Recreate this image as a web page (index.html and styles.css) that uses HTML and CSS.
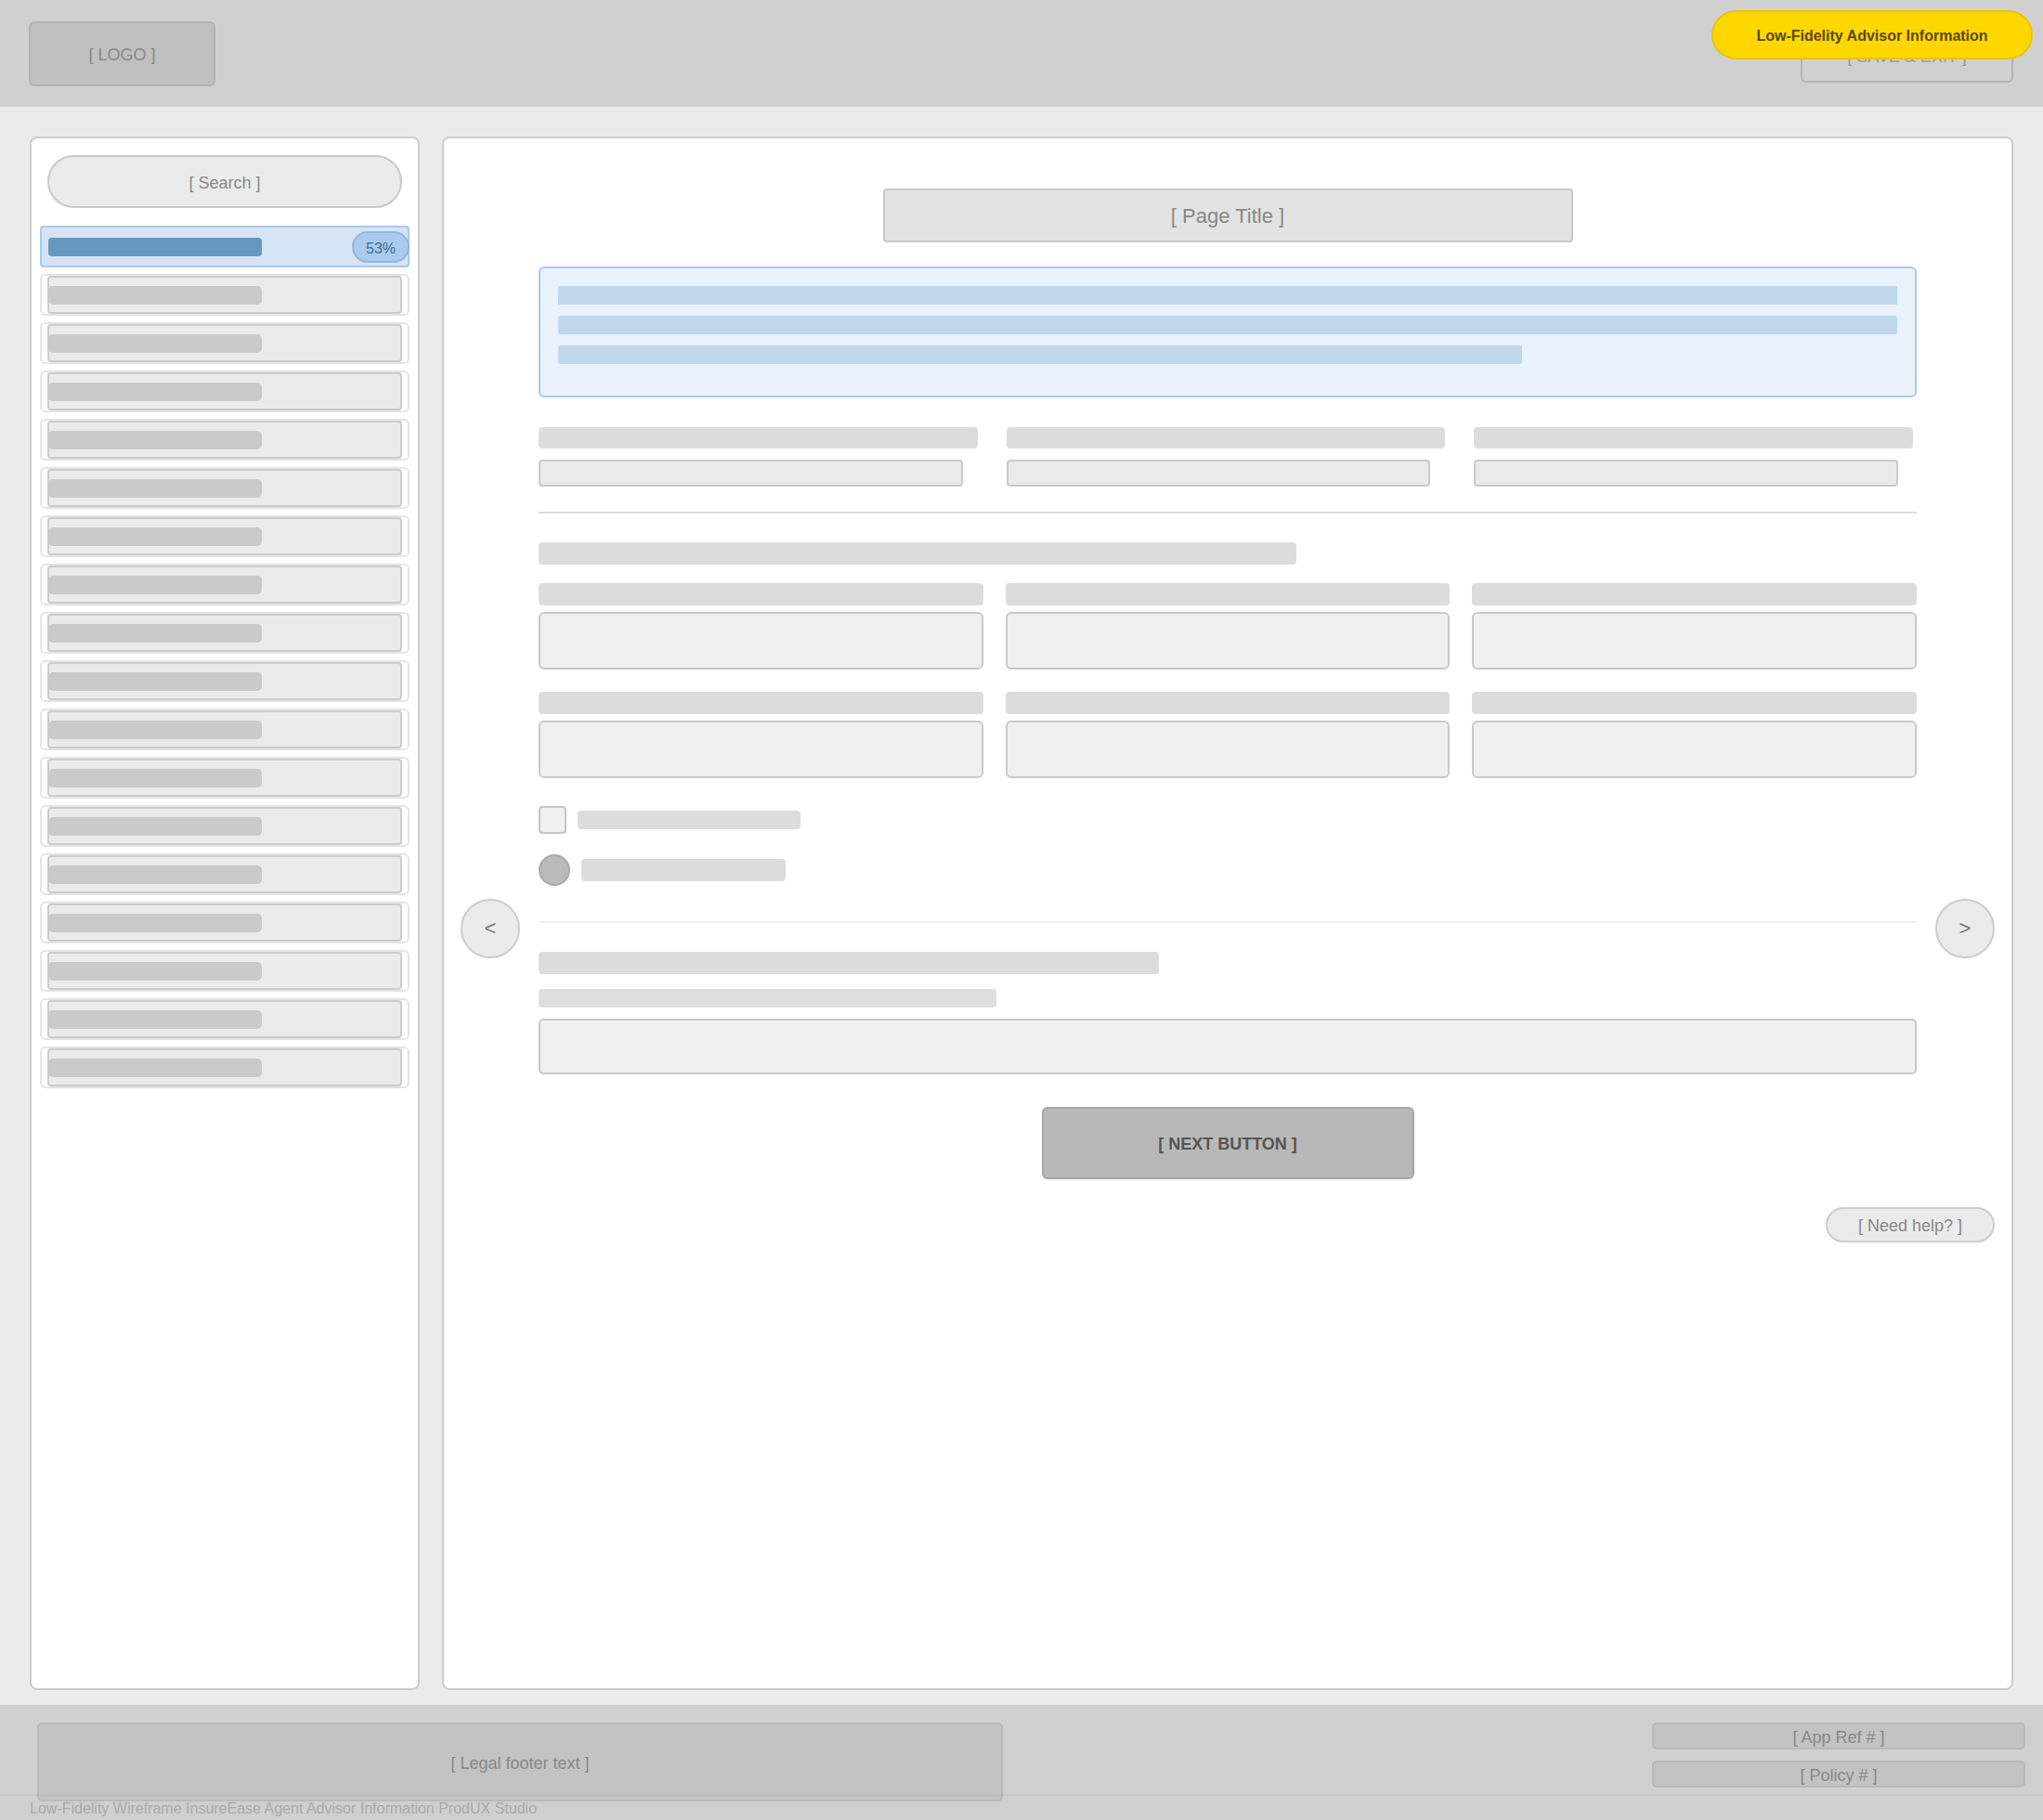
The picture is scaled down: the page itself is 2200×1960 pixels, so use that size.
FILE: index.html
```html
<!DOCTYPE html>
<html lang="en">
<head>
    <meta charset="utf-8">
    <title>Advisor Information</title>
    <link rel="stylesheet" href="styles.css">
</head>
<body>

<header class="topbar">
    <div class="logo">[ LOGO ]</div>
    <div class="exit-btn">[ SAVE &amp; EXIT ]</div>
    <div class="badge">Low-Fidelity Advisor Information</div>
</header>

<main class="workspace">

    <aside class="sidebar">
        <div class="search">[ Search ]</div>

        <div class="step step-active">
            <span class="step-bar"></span>
            <span class="step-pct">53%</span>
        </div>
        <div class="step"><div class="step-inner"><span class="step-bar"></span></div></div>
        <div class="step"><div class="step-inner"><span class="step-bar"></span></div></div>
        <div class="step"><div class="step-inner"><span class="step-bar"></span></div></div>
        <div class="step"><div class="step-inner"><span class="step-bar"></span></div></div>
        <div class="step"><div class="step-inner"><span class="step-bar"></span></div></div>
        <div class="step"><div class="step-inner"><span class="step-bar"></span></div></div>
        <div class="step"><div class="step-inner"><span class="step-bar"></span></div></div>
        <div class="step"><div class="step-inner"><span class="step-bar"></span></div></div>
        <div class="step"><div class="step-inner"><span class="step-bar"></span></div></div>
        <div class="step"><div class="step-inner"><span class="step-bar"></span></div></div>
        <div class="step"><div class="step-inner"><span class="step-bar"></span></div></div>
        <div class="step"><div class="step-inner"><span class="step-bar"></span></div></div>
        <div class="step"><div class="step-inner"><span class="step-bar"></span></div></div>
        <div class="step"><div class="step-inner"><span class="step-bar"></span></div></div>
        <div class="step"><div class="step-inner"><span class="step-bar"></span></div></div>
        <div class="step"><div class="step-inner"><span class="step-bar"></span></div></div>
        <div class="step"><div class="step-inner"><span class="step-bar"></span></div></div>
    </aside>

    <section class="panel">

        <div class="nav-arrow nav-prev">&lt;</div>
        <div class="nav-arrow nav-next">&gt;</div>

        <div class="content">
            <div class="page-title">[ Page Title ]</div>

            <div class="info">
                <div class="info-line info-line-first"></div>
                <div class="info-line"></div>
                <div class="info-line info-line-short"></div>
            </div>

            <div class="summary">
                <div class="summary-field">
                    <div class="summary-label"></div>
                    <div class="summary-input"></div>
                </div>
                <div class="summary-field">
                    <div class="summary-label"></div>
                    <div class="summary-input"></div>
                </div>
                <div class="summary-field">
                    <div class="summary-label"></div>
                    <div class="summary-input"></div>
                </div>
            </div>

            <hr class="divider">

            <div class="section-title"></div>

            <div class="fields">
                <div class="field"><div class="field-label"></div><div class="field-input"></div></div>
                <div class="field"><div class="field-label"></div><div class="field-input"></div></div>
                <div class="field"><div class="field-label"></div><div class="field-input"></div></div>
                <div class="field"><div class="field-label"></div><div class="field-input"></div></div>
                <div class="field"><div class="field-label"></div><div class="field-input"></div></div>
                <div class="field"><div class="field-label"></div><div class="field-input"></div></div>
            </div>

            <div class="option option-check">
                <span class="checkbox"></span>
                <span class="option-text"></span>
            </div>
            <div class="option option-radio">
                <span class="radio"></span>
                <span class="option-text"></span>
            </div>

            <hr class="divider divider-light">

            <div class="note-title"></div>
            <div class="note-hint"></div>
            <div class="note-input"></div>

            <div class="next-btn">[ NEXT BUTTON ]</div>
        </div>

        <div class="help-row">
            <div class="help-btn">[ Need help? ]</div>
        </div>

    </section>

</main>

<footer class="footer">
    <div class="legal">[ Legal footer text ]</div>
    <div class="refs">
        <div class="ref">[ App Ref # ]</div>
        <div class="ref">[ Policy # ]</div>
    </div>
</footer>

<div class="caption">Low-Fidelity Wireframe InsureEase Agent Advisor Information ProdUX Studio</div>

</body>
</html>
```

FILE: styles.css
```css
* {
    margin: 0;
    padding: 0;
    box-sizing: border-box;
}

body {
    position: relative;
    width: 2200px;
    height: 1960px;
    display: flex;
    flex-direction: column;
    background-color: #ebebeb;
    font-family: "Liberation Sans", Arial, sans-serif;
    color: #888888;
    overflow: hidden;
}

/* top bar */

.topbar {
    position: relative;
    height: 115px;
    flex: none;
    display: flex;
    justify-content: space-between;
    align-items: center;
    padding: 0 32px 0 31px;
    background-color: #d0d0d0;
}

.logo {
    width: 201px;
    height: 70px;
    padding-top: 3px;
    display: flex;
    align-items: center;
    justify-content: center;
    background-color: #c0c0c0;
    border: 2px solid #b3b3b3;
    border-radius: 6px;
    font-size: 18px;
}

.exit-btn {
    width: 229px;
    height: 62px;
    margin-top: 1px;
    padding-top: 6px;
    display: flex;
    align-items: center;
    justify-content: center;
    border: 2px solid #b3b3b3;
    border-radius: 6px;
    font-size: 18px;
    color: #999999;
}

.badge {
    position: absolute;
    top: 11px;
    right: 11px;
    width: 346px;
    height: 53px;
    padding-top: 3px;
    display: flex;
    align-items: center;
    justify-content: center;
    background-color: #ffd700;
    border: 2px solid #e8c400;
    border-radius: 27px;
    font-size: 16px;
    font-weight: bold;
    color: #594800;
}

/* workspace */

.workspace {
    flex: 1;
    display: flex;
    gap: 24px;
    padding: 32px 32px 16px 32px;
}

.sidebar {
    width: 420px;
    flex: none;
    padding: 18px 9px;
    background-color: #ffffff;
    border: 2px solid #cdcdcd;
    border-radius: 8px;
    display: flex;
    flex-direction: column;
    gap: 7px;
}

.search {
    height: 57px;
    margin: 0 8px 12px;
    padding-top: 3px;
    display: flex;
    align-items: center;
    justify-content: center;
    background-color: #ebebeb;
    border: 2px solid #c9c9c9;
    border-radius: 29px;
    font-size: 18px;
}

.step {
    height: 45px;
    padding: 0 6px;
    border: 2px solid #e4e4e4;
    border-radius: 6px;
    background-color: #ffffff;
}

.step-inner {
    height: 100%;
    display: flex;
    align-items: center;
    background-color: #ebebeb;
    border: 2px solid #cccccc;
    border-radius: 4px;
}

.step-bar {
    display: block;
    width: 230px;
    height: 20px;
    margin-left: -1px;
    background-color: #cacaca;
    border-radius: 5px;
}

.step-active {
    display: flex;
    align-items: center;
    justify-content: space-between;
    padding: 0 0 0 7px;
    background-color: #d4e4f6;
    border-color: #a9c9ee;
    border-radius: 4px;
}

.step-active .step-bar {
    margin-left: 0;
    background-color: #6698bd;
    border-radius: 4px;
}

.step-pct {
    width: 62px;
    height: 34px;
    margin-right: -2px;
    padding-top: 5px;
    display: flex;
    align-items: center;
    justify-content: center;
    background-color: #abcbee;
    border: 2px solid #93b7dd;
    border-radius: 17px;
    font-size: 16px;
    color: #3e6d99;
}

/* main panel */

.panel {
    position: relative;
    flex: 1;
    padding: 54px 18px 0;
    background-color: #ffffff;
    border: 2px solid #cdcdcd;
    border-radius: 8px;
}

.nav-arrow {
    position: absolute;
    top: 819px;
    width: 64px;
    height: 64px;
    display: flex;
    align-items: center;
    justify-content: center;
    background-color: #ebebeb;
    border: 2px solid #cccccc;
    border-radius: 50%;
    font-size: 22px;
    color: #777777;
}

.nav-prev {
    left: 18px;
}

.nav-next {
    right: 18px;
}

.content {
    margin: 0 84px;
}

.page-title {
    width: 743px;
    height: 58px;
    margin: 0 auto;
    padding-top: 2px;
    display: flex;
    align-items: center;
    justify-content: center;
    background-color: #e3e3e3;
    border: 2px solid #c9c9c9;
    border-radius: 4px;
    font-size: 22px;
}

.info {
    height: 141px;
    margin-top: 26px;
    padding: 19px;
    display: flex;
    flex-direction: column;
    gap: 12px;
    background-color: #eaf2fd;
    border: 2px solid #a9c9ee;
    border-radius: 6px;
}

.info-line {
    height: 20px;
    background-color: #c0d7ee;
    border-radius: 3px;
}

.info-line-first {
    border-radius: 0;
}

.info-line-short {
    width: 72%;
}

.summary {
    margin-top: 32px;
    padding-right: 4px;
    display: grid;
    grid-template-columns: repeat(3, 1fr);
    gap: 31px;
}

.summary-label {
    height: 23px;
    background-color: #dcdcdc;
    border-radius: 4px;
}

.summary-input {
    width: calc(100% - 16px);
    height: 29px;
    margin-top: 12px;
    background-color: #eaeaea;
    border: 2px solid #cacaca;
    border-radius: 4px;
}

.divider {
    height: 2px;
    margin-top: 27px;
    border: none;
    background-color: #dddddd;
}

.section-title {
    width: 55%;
    height: 24px;
    margin-top: 31px;
    background-color: #dcdcdc;
    border-radius: 4px;
}

.fields {
    margin-top: 20px;
    display: grid;
    grid-template-columns: repeat(3, 1fr);
    column-gap: 24px;
    row-gap: 24px;
}

.field-label {
    height: 24px;
    background-color: #dcdcdc;
    border-radius: 4px;
}

.field-input {
    height: 62px;
    margin-top: 7px;
    background-color: #f0f0f0;
    border: 2px solid #c9c9c9;
    border-radius: 6px;
}

.option {
    display: flex;
    align-items: center;
    gap: 12px;
}

.option-check {
    margin-top: 30px;
}

.option-radio {
    margin-top: 22px;
}

.checkbox {
    width: 30px;
    height: 30px;
    background-color: #f0f0f0;
    border: 2px solid #c6c6c6;
    border-radius: 4px;
}

.option-check .option-text {
    width: 240px;
    height: 20px;
}

.radio {
    width: 34px;
    height: 34px;
    background-color: #bbbbbb;
    border: 2px solid #aaaaaa;
    border-radius: 50%;
}

.option-radio .option-text {
    width: 220px;
    height: 24px;
}

.option-text {
    background-color: #dcdcdc;
    border-radius: 4px;
}

.divider-light {
    margin-top: 38px;
    background-color: #eeeeee;
}

.note-title {
    width: 45%;
    height: 24px;
    margin-top: 31px;
    background-color: #dcdcdc;
    border-radius: 4px;
}

.note-hint {
    width: 33.2%;
    height: 20px;
    margin-top: 16px;
    background-color: #dedede;
    border-radius: 4px;
}

.note-input {
    height: 60px;
    margin-top: 12px;
    background-color: #f0f0f0;
    border: 2px solid #c9c9c9;
    border-radius: 5px;
}

.next-btn {
    width: 401px;
    height: 78px;
    margin: 35px auto 0;
    padding-top: 2px;
    display: flex;
    align-items: center;
    justify-content: center;
    background-color: #b8b8b8;
    border: 2px solid #a6a6a6;
    border-radius: 6px;
    font-size: 18px;
    font-weight: bold;
    color: #555555;
}

.help-row {
    margin-top: 30px;
    display: flex;
    justify-content: flex-end;
}

.help-btn {
    width: 182px;
    height: 38px;
    padding-top: 2px;
    display: flex;
    align-items: center;
    justify-content: center;
    background-color: #ebebeb;
    border: 2px solid #cccccc;
    border-radius: 19px;
    font-size: 18px;
}

/* footer */

.footer {
    height: 124px;
    flex: none;
    display: flex;
    justify-content: space-between;
    align-items: flex-start;
    padding: 19px 19px 0 40px;
    background-color: #d0d0d0;
}

.legal {
    width: 1040px;
    height: 85px;
    padding-top: 3px;
    display: flex;
    align-items: center;
    justify-content: center;
    background-color: #c3c3c3;
    border: 2px solid #b9b9b9;
    border-radius: 5px;
    font-size: 18px;
}

.refs {
    width: 402px;
    display: flex;
    flex-direction: column;
    gap: 12px;
}

.ref {
    height: 29px;
    padding-top: 3px;
    display: flex;
    align-items: center;
    justify-content: center;
    background-color: #c3c3c3;
    border: 2px solid #b9b9b9;
    border-radius: 5px;
    font-size: 18px;
}

.caption {
    position: absolute;
    left: 0;
    right: 0;
    bottom: 0;
    height: 28px;
    padding: 5px 0 0 32px;
    border-top: 2px solid rgba(0, 0, 0, 0.035);
    font-size: 16px;
    color: #a9a9a9;
}
```
